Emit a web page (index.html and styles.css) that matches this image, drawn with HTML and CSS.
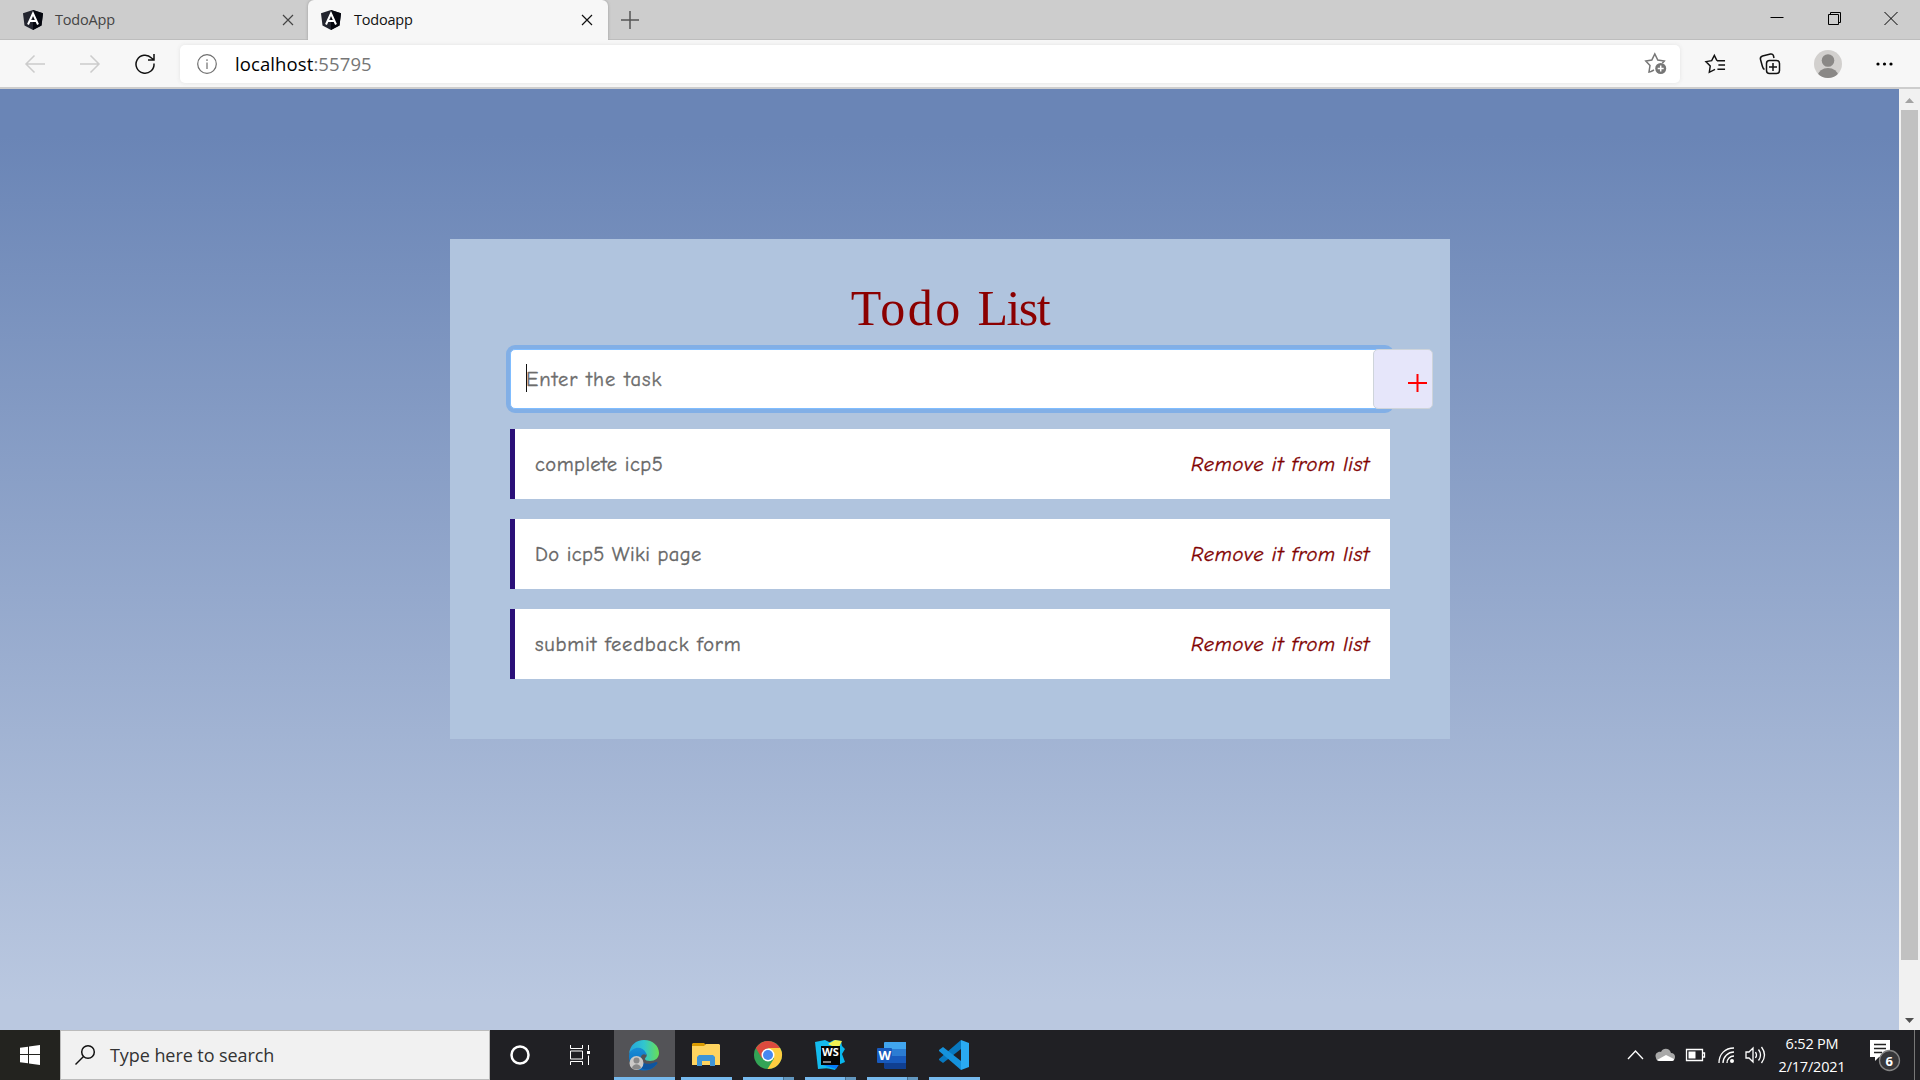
FILE: index.html
```html
<!DOCTYPE html>
<html lang="en">
<head>
<meta charset="utf-8">
<title>Todoapp</title>
<link rel="stylesheet" href="styles.css">
</head>
<body>
<svg class="defs" width="0" height="0">
  <symbol id="angular" viewBox="0 0 20 20"><path d="M10 0 20 3.2 18.5 15.5 10 20 1.500 15.500 0 3.200z" fill="#23252f"/><path d="M10 0 20 3.2 18.5 15.5 10 20z" fill="#05070f"/><path d="M5 14.500 10 3.500l5 11M7 11h6" fill="none" stroke="#fff" stroke-width="2"/></symbol>
  <symbol id="cross" viewBox="0 0 12 12"><path d="M1 1l10 10M11 1 1 11"/></symbol>
</svg>
<div class="screen">
  <header class="tabs">
    <div class="tab"><svg class="logo"><use href="#angular"/></svg><span>TodoApp</span><svg class="close"><use href="#cross"/></svg></div>
    <div class="tab active"><svg class="logo"><use href="#angular"/></svg><span>Todoapp</span><svg class="close"><use href="#cross"/></svg></div>
    <svg class="newtab" viewBox="0 0 18 18"><path d="M9 0v18M0 9h18"/></svg>
    <div class="window-buttons">
      <svg viewBox="0 0 14 14"><path d="M.5 6.500h13"/></svg>
      <svg viewBox="0 0 14 14"><path d="M1.500 3.500h10v10h-10zM3.500 3.500v-2h10v10h-2"/></svg>
      <svg viewBox="0 0 14 14"><path d="M.5 1l13 13M13.500 1l-13 13"/></svg>
    </div>
  </header>
  <nav class="toolbar">
    <svg class="nav-icon off" viewBox="0 0 20 20"><path d="M20 10H1M9.500 1.500 1 10l8.500 8.500"/></svg>
    <svg class="nav-icon off" viewBox="0 0 20 20"><path d="M0 10h19M10.500 1.500 19 10l-8.500 8.500"/></svg>
    <svg class="nav-icon" viewBox="0 0 20 20"><path d="M19 9.500A9 9 0 1 1 16.500 4L19 6M19 0v6h-6"/></svg>
    <div class="address">
      <svg class="info" viewBox="0 0 20 20"><circle cx="10" cy="10" r="9.300"/><path d="M10 8.500V15M10 5.200v1.800"/></svg>
      <span class="url">localhost<i>:55795</i></span>
      <svg class="add-star" viewBox="0 0 22 22"><path d="M6 18.500l-2 .5 1-6.500L.8 8l6-1 3-6 3 6 6.500 1-2 2.300M6 18.500l3-1.500"/><circle cx="15.700" cy="15.500" r="5.500" fill="#767676" stroke="none"/><path d="M15.700 12.500v6M12.700 15.500h6" stroke="#fff"/></svg>
    </div>
    <svg class="fav" viewBox="0 0 22 20"><path d="M12.500 6.500 9.800 1 7 6.500 1 7.500l4.500 4.500-1 6.700 6-3M12.500 6.500H21M14 11h7M13 15.500h8"/></svg>
    <svg class="collections" viewBox="0 0 22 22"><path d="M5.500 16.500C4 16 3.700 14.500 3.300 13L1.500 6.500C1 4.700 2 3.500 3.500 3l8-2c1.500-.3 2.800.5 3 2l.5 2"/><rect x="7.500" y="7.500" width="13" height="13" rx="3"/><path d="M14 10v8M10 14h8"/></svg>
    <svg class="profile" viewBox="0 0 28 28"><clipPath id="pc"><circle cx="14" cy="14" r="14"/></clipPath><circle cx="14" cy="14" r="14" fill="#d2d0ce"/><g clip-path="url(#pc)" fill="#8a8886"><circle cx="14" cy="10.500" r="6.300"/><ellipse cx="14" cy="25.500" rx="10" ry="7.500"/></g></svg>
    <svg class="more" viewBox="0 0 17 4"><circle cx="2" cy="2" r="1.600"/><circle cx="8.500" cy="2" r="1.600"/><circle cx="15" cy="2" r="1.600"/></svg>
  </nav>
  <div class="viewport">
    <main class="page">
      <section class="card">
        <h1><span class="wide">Todo</span> <span class="tight">List</span></h1>
        <div class="entry"><div class="input"><b class="caret"></b><span>Enter the task</span></div><div class="add"><svg viewBox="0 0 19 19"><path d="M9.500 0v18M0 9h19"/></svg></div></div>
        <ul>
          <li><span class="t1">complete icp5</span><em>Remove it from list</em></li>
          <li><span class="t2">Do icp5 Wiki page</span><em>Remove it from list</em></li>
          <li><span class="t3">submit feedback form</span><em>Remove it from list</em></li>
        </ul>
      </section>
    </main>
    <aside class="scroll"><svg viewBox="0 0 9 5"><path d="M0 5 4.500 0 9 5z" fill="#a3a3a3"/></svg><div class="thumb"></div><svg viewBox="0 0 9 5"><path d="M0 0h9L4.500 5z" fill="#505050"/></svg></aside>
  </div>
  <footer class="taskbar">
    <div class="start"><svg viewBox="0 0 20 20"><path d="M0 2.800 8 1.700V9H0zM9 1.500 20 0v9H9zM0 10h8v8.300L0 17.200zM9 10h11v10L9 18.500z" fill="#fff"/></svg></div>
    <div class="search"><svg viewBox="0 0 20 20"><circle cx="13" cy="7" r="6.300"/><path d="M8.500 11.500.5 19.500"/></svg><span>Type here to search</span></div>
    <div class="app plain"><svg width="20" height="20" viewBox="0 0 20 20"><circle cx="10" cy="10" r="8.500" fill="none" stroke="#fff" stroke-width="2.500"/></svg></div>
    <div class="app plain view"><svg width="20" height="20" viewBox="0 0 20 20"><path d="M.5 0v3.500h12V0M.5 20v-3.500h12V20M.5 6h12v8H.5zM18.500 0v5M18.500 10.500V20" fill="none" stroke="#fff"/><path d="M17 6h3v3h-3z" fill="#fff"/></svg></div>
    <div class="app current"><svg width="32" height="32" viewBox="0 0 32 32"><defs><linearGradient id="eg"><stop stop-color="#25a4dc"/><stop offset=".5" stop-color="#31c6cf"/><stop offset="1" stop-color="#69df54"/></linearGradient><linearGradient id="eb" x2="0" y2="1"><stop stop-color="#198fd7"/><stop offset="1" stop-color="#0868bd"/></linearGradient></defs><path d="M1 18C1 10 6 8 11 8c7 0 9 5 7 8-4-3-7 3-4 7 4 5 10 4 14 1 1 0 1 1 0 2C20 36 1 32 1 18z" fill="url(#eb)"/><path d="M1 15C2 6 8 1 16 1c9 0 15 6 15 13 0 5-4 8-9 8-3 0-5-1-5-2 0-2 3-2 1-6C14 6 4 8 1 15z" fill="url(#eg)"/><path d="M12 17c-1 7 7 10 16 6 2 0 2 1 0 3-5 6-14 6-17 0-1-3-1-7 1-9z" fill="#0d559f"/><circle cx="8.500" cy="24" r="7" fill="#cbc9c7"/><circle cx="8.500" cy="21.500" r="3" fill="#888"/><path d="M4 29c1-5 8-5 9 0-3 2-6 2-9 0z" fill="#888"/></svg></div>
    <div class="app open"><svg width="28" height="28" viewBox="0 0 28 28"><path d="M0 5V3l1-1h11l3 3z" fill="#db9b00"/><path d="M0 5h12l2-2h13l1 1v20H0z" fill="#ffd45f"/><path d="M5 25V16l2-2h14l2 2v9h-5v-5h-8v5z" fill="#3e95d7"/></svg></div>
    <div class="app open many"><svg width="28" height="28" viewBox="0 0 28 28"><circle cx="14" cy="14" r="14" fill="#33a456"/><path d="M1.900 7A14 14 0 0 1 26.100 7H14L8 17.500z" fill="#dc4b3e"/><path d="M26.100 7A14 14 0 0 1 13.500 28L20 17.500 14 7z" fill="#fecd40"/><circle cx="14" cy="14" r="6.500" fill="#fff"/><circle cx="14" cy="14" r="5" fill="#4688f1"/></svg></div>
    <div class="app open many"><svg width="32" height="32" viewBox="0 0 32 32"><path d="M1 3 11 1l6 3-1 25-12 1z" fill="#14bbee"/><path d="m14 4 6-3 7 1 1 5 3 3-3 5 3 8-7 3-3 5-9-2z" fill="#08b7ee"/><path d="m14 5 7-4 7 1-4 8z" fill="#f4f052"/><path d="m9 26 13 4 4-6z" fill="#087cfa"/><path d="M7 7h19v19H7z" fill="#050505"/><text x="8" y="17" class="ws">WS</text><path d="M9 23h8" stroke="#fff"/></svg></div>
    <div class="app open many"><svg width="30" height="28" viewBox="0 0 30 28"><path d="M7 2q0-1 1-1h21v7H7z" fill="#41a5ee"/><path d="M7 8h22v7H7z" fill="#2b7cd3"/><path d="M7 15h22v7H7z" fill="#185abd"/><path d="M7 22h22v6H8l-1-1z" fill="#103f91"/><rect y="7" width="15" height="15" rx="1" fill="#185abd"/><text x="1.500" y="18.800" class="word">W</text></svg></div>
    <div class="app open"><svg width="30" height="30" viewBox="0 0 30 30"><path d="m22 0 8 3v24l-8 3z" fill="#2aaaf2"/><path d="M22 0v9L4 23l-4-3v-1z" fill="#0878bf"/><path d="M22 30v-9L4 7 0 10v1z" fill="#1592dc"/></svg></div>
    <div class="tray">
      <svg class="up" width="17" height="10" viewBox="0 0 17 10"><path d="M1 9 8.500 1 16 9"/></svg>
      <svg class="cloud" width="20" height="14" viewBox="0 0 20 14"><path d="M1 10C-1 5 4 3 6 4c2-5 9-4 10 1 5 0 5 6 2 8H4c-1 0-3-1-3-3z" fill="#a8a8a8" stroke="none"/><path d="m2 12 9-5 8 4c0 1-1 2-2 2H4z" fill="#fff" stroke="none"/></svg>
      <svg class="batt" width="19" height="12" viewBox="0 0 19 12"><path d="M.5.5h16v11H.5zM17 4h1.500v4H17"/><path d="M2.500 2.500h7v7h-7z" fill="#fff" stroke="none"/></svg>
      <svg class="wifi" width="17" height="17" viewBox="0 0 17 17"><path d="M1 16C1 7 7 1 16 1M5 16C5 10 10 5 16 5M9 16c0-4 3-7 7-7"/><circle cx="14" cy="14" r="2" fill="#fff" stroke="none"/></svg>
      <svg class="vol" width="21" height="18" viewBox="0 0 21 18"><path d="M1 6h3l4-4v14l-4-4H1zM10.500 6q2 3 0 6M13.500 3.500q4 5.500 0 11M16.500 1q6 8 0 16"/></svg>
      <div class="clock"><span>6:52 PM</span><span>2/17/2021</span></div>
      <svg class="note" width="32" height="32" viewBox="0 0 32 32"><path d="M1 1h20v17H10l-4 4v-4H1z" fill="#fff" stroke="none"/><path d="M5 5.500h12M5 9.500h12M5 13.500h8" stroke="#222"/><circle cx="20.500" cy="21.500" r="10" fill="#37373a" stroke="#858585"/><text x="16.500" y="26.500" class="badge">6</text></svg>
    </div>
  </footer>
</div>
</body>
</html>
```
FILE: styles.css
```css
* { box-sizing: border-box; }
body { margin: 0; font-family: "Open Sans", "Noto Sans", sans-serif; }
svg { display: block; flex: none; overflow: visible; }
.defs { position: absolute; }
.screen { width: 1920px; height: 1080px; display: flex; flex-direction: column; overflow: hidden; }

.tabs { height: 40px; flex: none; display: flex; background: #cdcdcd; box-shadow: inset 0 -1px #bdbdbd; }
.tab { width: 308px; display: flex; align-items: center; padding: 0 14px 0 23px; color: #444; font-size: 14.500px; }
.tab span { margin-left: 12px; flex: 1; padding-bottom: 1px; letter-spacing: -.2px; }
.tab.active { width: 300px; padding: 0 15px 0 13px; background: #f7f7f7; color: #111; border-radius: 6px 6px 0 0; box-shadow: 0 0 3px #999; clip-path: inset(0 -3px); }
.active span { margin-left: 13px; }
.logo { width: 20px; height: 20px; }
.close { width: 12px; height: 12px; stroke: currentColor; stroke-width: 1.200; }
.newtab { width: 18px; height: 18px; margin: 11px 0 0 13px; stroke: #555; stroke-width: 1.500; }
.window-buttons { margin: 11px 22px 0 auto; display: flex; gap: 43px; }
.window-buttons svg { width: 14px; height: 14px; fill: none; stroke: #000; }

.toolbar { height: 49px; flex: none; display: flex; align-items: center; padding: 1px 27px 0 25px; background: #f7f7f7; border-bottom: 2px solid #cdcdcd; }
.toolbar svg { fill: none; stroke: #111; stroke-width: 1.500; }
.nav-icon { width: 20px; height: 20px; margin-right: 35px; }
.toolbar .off { stroke: #ccc; }
.nav-icon:nth-child(3) { margin-right: 25px; }
.address { width: 1500px; height: 38px; display: flex; align-items: center; padding: 0 13px 0 17px; background: #fff; border-radius: 5px; box-shadow: 0 0 4px #e3e3e3; }
.toolbar .info { width: 20px; height: 20px; stroke: #6f6f6f; stroke-width: 1.200; }
.url { margin-left: 18px; flex: 1; padding-bottom: 1px; font-size: 18.500px; letter-spacing: .1px; }
.url i { font-style: normal; color: #767676; }
.toolbar .add-star { width: 22px; height: 22px; stroke: #767676; }
.fav { width: 21px; height: 20px; margin-left: 25px; }
.collections { width: 22px; height: 22px; margin-left: 33px; }
.toolbar .profile { width: 28px; height: 28px; margin-left: 33px; stroke: none; }
.toolbar .more { width: 17px; height: 4px; margin-left: auto; fill: #000; stroke: none; }

.viewport { height: 941px; flex: none; display: flex; }
.page { width: 1899px; padding-top: 150px; background: linear-gradient(#6a85b6 5%, #bac8e0 97%); }
.card { width: 1000px; height: 500px; margin: 0 auto 0 450px; padding: 34px 60px 0; background: #b0c4de; font-family: "Comic Sans MS", "Comic Neue", "Open Sans", sans-serif; }
h1 { height: 76px; margin: 0; text-align: center; font: 400 50px/70px "Bell MT", "Liberation Serif", serif; word-spacing: 2px; color: #8b0000; }
.wide { letter-spacing: 2.500px; }
.tight { letter-spacing: -1.500px; }
.entry { display: flex; height: 60px; }
.input { width: 880px; flex: none; display: flex; align-items: center; padding-left: 15px; background: #fff; border: 1px solid #80bdff; border-radius: 5px; box-shadow: 0 0 0 4px #82afe6; color: #6c6c6c; font-size: 20.500px; letter-spacing: 1px; -webkit-text-stroke: .35px; }
.caret { width: 1px; height: 28px; margin: -3px -1px 0 0; background: #111; }
.add { width: 60px; flex: none; margin-left: -17px; z-index: 1; display: flex; align-items: center; justify-content: flex-end; padding: 8px 5px 0 0; background: #e6e6fa; border: 1px solid #ced4da; border-radius: 5px; }
.add svg { width: 19px; height: 19px; stroke: red; stroke-width: 2; }
ul { list-style: none; margin: 20px 0 0; padding: 0; display: grid; gap: 20px; }
li { height: 70px; display: flex; align-items: center; justify-content: space-between; padding: 1px 20px 0; background: #fff; border-left: 5px solid #2b1078; color: #666; font-size: 20.500px; -webkit-text-stroke: .35px; }
.t1 { letter-spacing: .46px; }
.t2 { letter-spacing: .36px; }
.t3 { letter-spacing: .8px; }
em { color: #800000; letter-spacing: .67px; }

.scroll { width: 21px; display: flex; flex-direction: column; align-items: center; padding: 9px 0 7px; background: #f1f1f1; }
.scroll svg { width: 9px; height: 5px; }
.thumb { width: 17px; height: 850px; margin: 7px 0 auto; background: #c1c1c1; }

.taskbar { height: 50px; flex: none; display: flex; background: #202024; color: #fff; }
.start { width: 60px; display: grid; place-items: center; background: #23231f; }
.start svg { width: 20px; height: 20px; }
.search { width: 430px; display: flex; align-items: center; padding-left: 14px; background: #f1f1f1; border: 1px solid #bbb; color: #333; font-size: 18px; letter-spacing: -.07px; }
.search svg { width: 20px; height: 20px; fill: none; stroke: #111; stroke-width: 1.500; }
.search span { margin-left: 15px; }
.app { width: 62px; display: grid; place-items: center; }
.plain { width: 60px; }
.view { width: 64px; padding-right: 4px; }
.current { width: 61px; background: #535357; border-bottom: 3px solid #76b9ed; padding: 3px 2px 0 0; }
.open { background: linear-gradient(#76b9ed, #76b9ed) 6px 47px / 51px 3px no-repeat; }
.many { background: linear-gradient(90deg, #76b9ed 40px, #45708f 40px 41px, #6297bf 41px) 6px 47px / 51px 3px no-repeat; }
.ws { font: 700 11px "Open Sans", sans-serif; fill: #fff; }
.word { font: 700 13px "Open Sans", sans-serif; fill: #fff; }
.tray { margin-left: auto; display: flex; align-items: center; padding-right: 20px; box-shadow: inset -5px 0 #202024, inset -6px 0 #777; }
.tray svg { fill: none; stroke: #fff; stroke-width: 1.300; }
.tray .cloud { margin-left: 11px; }
.tray .batt { margin-left: 11px; }
.tray .wifi { margin-left: 13px; }
.tray .vol { margin-left: 10px; }
.clock { width: 68px; margin-left: 12px; display: grid; text-align: center; font-size: 14.500px; line-height: 23px; letter-spacing: -.2px; white-space: nowrap; }
.tray .note { margin-left: 23px; margin-right: -1px; }
.tray .badge { font: 700 13px "Open Sans", sans-serif; fill: #fff; stroke: none; }
```
